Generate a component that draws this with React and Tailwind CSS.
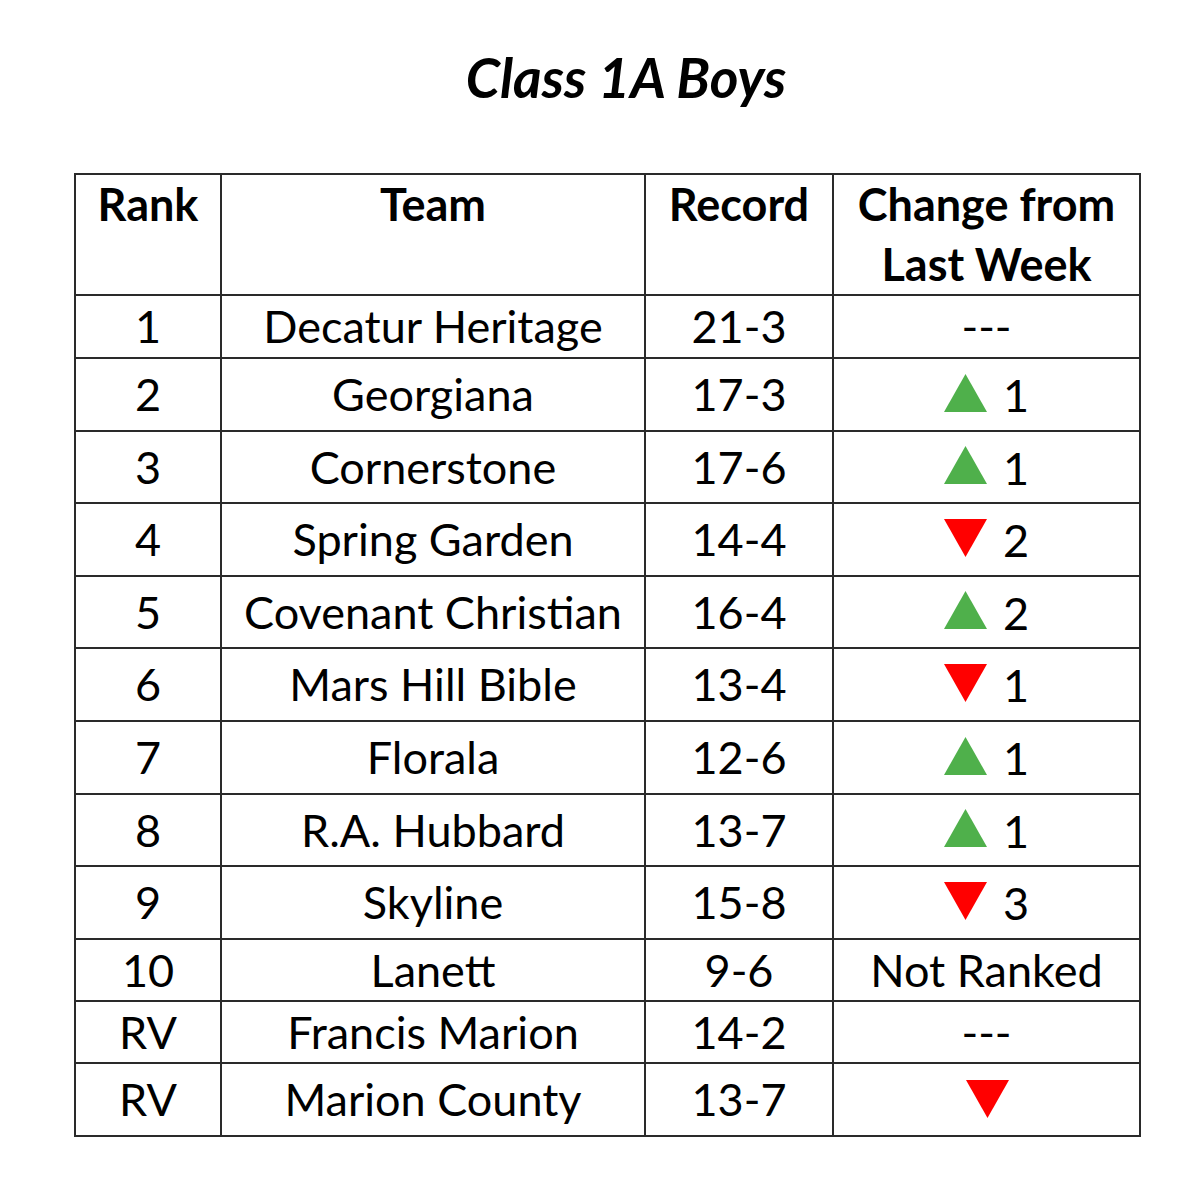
import React from "react";

const rows = [
  { rank: "1", team: "Decatur Heritage", rec: "21-3", ch: "dash", h: "h-[63px]" },
  { rank: "2", team: "Georgiana", rec: "17-3", ch: "up", n: "1", h: "h-[73px]" },
  { rank: "3", team: "Cornerstone", rec: "17-6", ch: "up", n: "1", h: "h-[72px]" },
  { rank: "4", team: "Spring Garden", rec: "14-4", ch: "down", n: "2", h: "h-[73px]" },
  { rank: "5", team: "Covenant Christian", rec: "16-4", ch: "up", n: "2", h: "h-[72px]" },
  { rank: "6", team: "Mars Hill Bible", rec: "13-4", ch: "down", n: "1", h: "h-[73px]" },
  { rank: "7", team: "Florala", rec: "12-6", ch: "up", n: "1", h: "h-[73px]" },
  { rank: "8", team: "R.A. Hubbard", rec: "13-7", ch: "up", n: "1", h: "h-[72px]" },
  { rank: "9", team: "Skyline", rec: "15-8", ch: "down", n: "3", h: "h-[73px]" },
  { rank: "10", team: "Lanett", rec: "9-6", ch: "text", t: "Not Ranked", h: "h-[62px]" },
  { rank: "RV", team: "Francis Marion", rec: "14-2", ch: "dash", h: "h-[62px]" },
  { rank: "RV", team: "Marion County", rec: "13-7", ch: "downonly", h: "h-[73px]" },
];

const Up = () => (
  <svg width="43" height="38" viewBox="0 0 43 38" className="block">
    <polygon points="21.5,0 43,38 0,38" fill="#4fb04b" />
  </svg>
);
const Down = () => (
  <svg width="43" height="38" viewBox="0 0 43 38" className="block">
    <polygon points="0,0 43,0 21.5,38" fill="#ff0000" />
  </svg>
);

const cell = "flex items-center justify-center border-r-2 border-b-2 border-[#2a2a2a]";
const gridCols = "grid grid-cols-[146px_424px_188px_307px]";

function Change({ r }) {
  if (r.ch === "dash") return <span>---</span>;
  if (r.ch === "text") return <span>{r.t}</span>;
  if (r.ch === "downonly")
    return (
      <div className="pl-[2px] pb-[2px]">
        <Down />
      </div>
    );
  return (
    <div className="flex items-center gap-[16px] pb-[4px]">
      {r.ch === "up" ? <Up /> : <Down />}
      <span className="pt-[6px]">{r.n}</span>
    </div>
  );
}

export default function App() {
  return (
    <div className="w-[1200px] h-[1192px] bg-white text-black [font-family:Lato,'Open_Sans',sans-serif]">
      <div className="pt-[50px] pl-[52px] text-center text-[55px] leading-none font-bold italic">
        Class 1A Boys
      </div>
      <div className="ml-[74px] mt-[68px] w-[1067px] border-l-2 border-t-2 border-[#2a2a2a] text-[45px] leading-none">
        <div className={`${gridCols} h-[121px] font-bold`}>
          <div className={`${cell} !items-start pt-[7px]`}>Rank</div>
          <div className={`${cell} !items-start pt-[7px]`}>Team</div>
          <div className={`${cell} !items-start pt-[7px]`}>Record</div>
          <div className={`${cell} flex-col !justify-start pt-[7px] gap-[15px]`}>
            <span>Change from</span>
            <span>Last Week</span>
          </div>
        </div>
        {rows.map((r, i) => (
          <div key={i} className={`${gridCols} ${r.h}`}>
            <div className={cell}>{r.rank}</div>
            <div className={cell}>{r.team}</div>
            <div className={cell}>{r.rec}</div>
            <div className={cell}>
              <Change r={r} />
            </div>
          </div>
        ))}
      </div>
    </div>
  );
}
